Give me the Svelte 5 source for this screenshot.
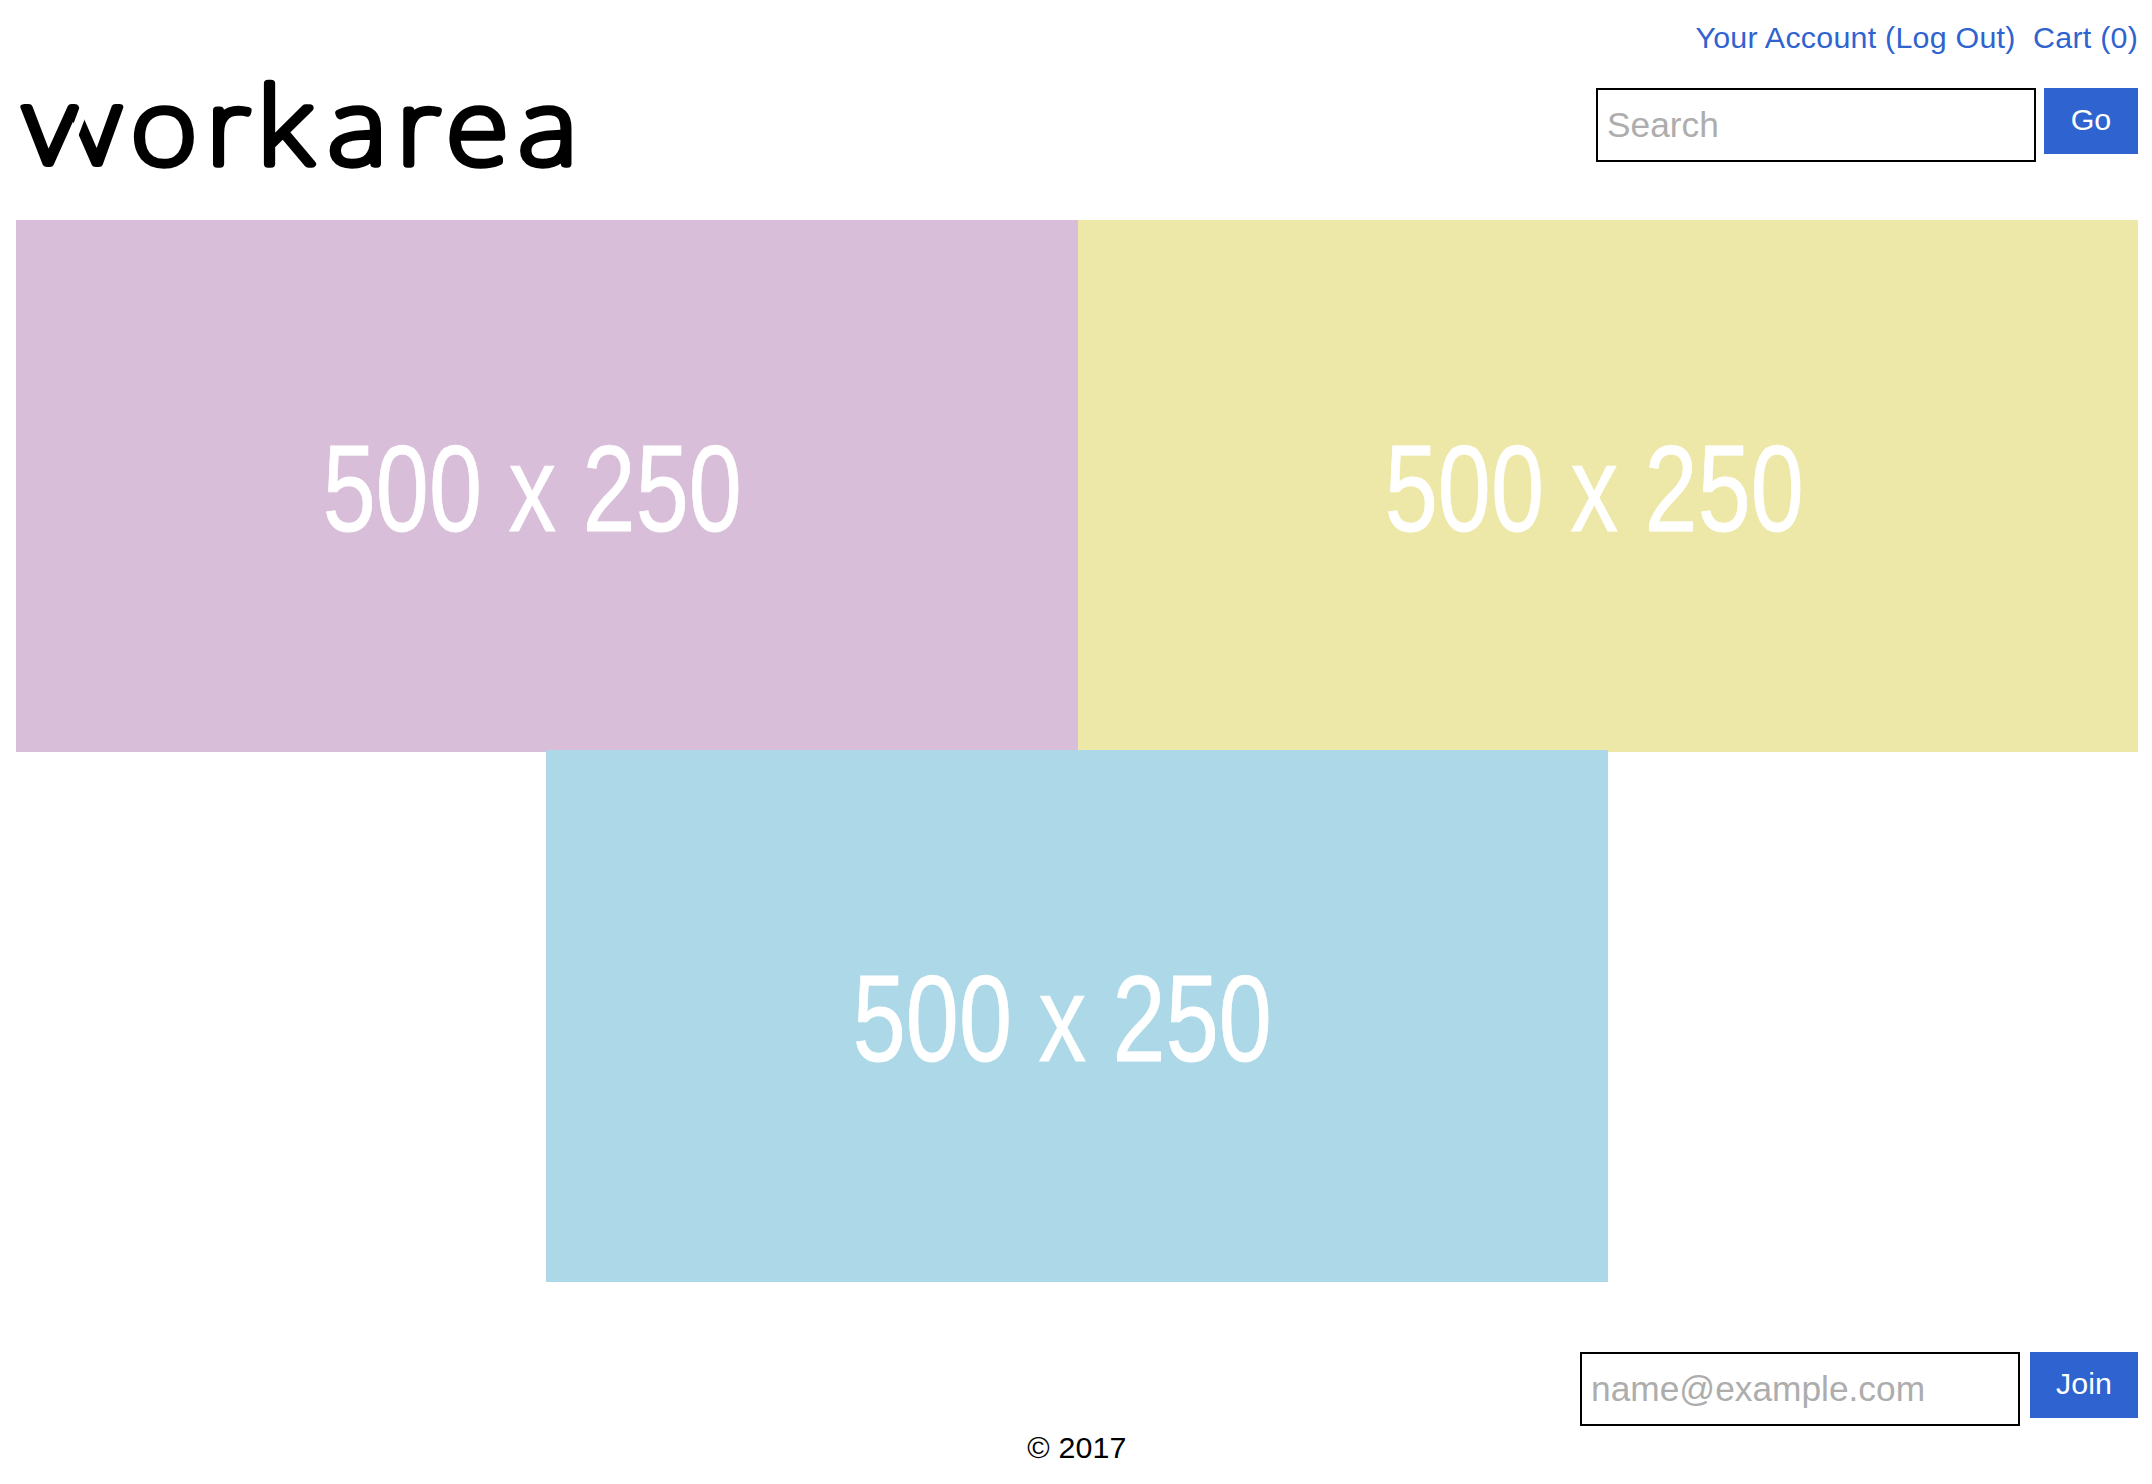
<script>
  const banners = [
    { name: 'thistle', label: '500 x 250' },
    { name: 'khaki', label: '500 x 250' },
    { name: 'sky', label: '500 x 250' }
  ];
</script>

<div class="page">
  <header>
    <a class="logo" href="#home" aria-label="workarea">
      <svg width="600" height="160" viewBox="0 40 600 160">
        <text class="mark wide" transform="translate(22 164) scale(1.36 1)">w</text>
        <!-- slit that separates the two strokes of the w -->
        <line class="slit" x1="84.5" y1="107" x2="72" y2="140" />
        <g transform="translate(0 164) scale(1.12 1)">
          <text class="mark" x="117.2 184.6 229.8 293 354.4 399 463.2" y="0">or<tspan class="tall">k</tspan>area</text>
        </g>
      </svg>
    </a>
    <div class="tools">
      <nav>
        <a href="#account">Your Account (Log Out)</a>
        <a href="#cart">Cart (0)</a>
      </nav>
      <form class="search">
        <input type="text" placeholder="Search" />
        <button type="button">Go</button>
      </form>
    </div>
  </header>

  <main>
    {#each banners as banner}
      <svg class="banner {banner.name}" viewBox="0 0 1062 532" preserveAspectRatio="xMinYMin slice">
        <text transform="translate(306.8 311) scale(0.785 1)">{banner.label}</text>
      </svg>
    {/each}
  </main>

  <footer>
    <form class="signup">
      <input type="text" placeholder="name@example.com" />
      <button type="button">Join</button>
    </form>
    <p>© 2017</p>
  </footer>
</div>

<style>
  :global(body) { background: #fff; overflow: hidden; }
  .page {
    box-sizing: border-box;
    width: 2152px;
    height: 1484px;
    padding: 0 14px 0 16px;
    font-family: "Liberation Sans", Arial, sans-serif;
    font-size: 30.4px;
    color: #000;
  }
  header { display: flex; justify-content: space-between; height: 220px; }
  .logo { margin: 40px 0 0 -16px; height: 160px; }
  .logo svg { display: block; overflow: visible; }
  .mark {
    font-family: "Noto Sans", sans-serif;
    font-weight: 100;
    font-size: 101.5px;
    fill: #000;
    stroke: #000;
    stroke-width: 7.3px;
    stroke-linejoin: round;
  }
  .wide { font-size: 107px; stroke-width: 5.9px; }
  .tall { font-size: 106.5px; }
  .slit { stroke: #fff; stroke-width: 9px; }
  .tools { display: flex; flex-direction: column; align-items: flex-end; }
  nav { display: flex; gap: 17.5px; height: 88px; line-height: 75px; letter-spacing: 0.24px; white-space: nowrap; }
  nav a { color: #2f63d0; text-decoration: none; }
  form { display: flex; align-items: flex-start; }
  .search { gap: 8px; }
  .signup { gap: 10px; justify-content: flex-end; }
  input {
    box-sizing: border-box;
    width: 440px;
    height: 74px;
    margin: 0;
    padding: 0 9px 1px;
    border: 2px solid #000;
    border-radius: 0;
    background: #fff;
    font: 35.3px "Liberation Sans", Arial, sans-serif;
  }
  input::placeholder { color: #adadad; opacity: 1; }
  button {
    height: 66px;
    padding: 0 0 4px;
    border: 0;
    background: #2f63d0;
    color: #fff;
    font: 30.4px "Liberation Sans", Arial, sans-serif;
  }
  .search button { width: 94px; }
  .signup button { width: 108px; }
  main { display: grid; grid-template-columns: 530px 532px 530px 530px; }
  .banner { display: block; width: 100%; height: 532px; }
  .banner text {
    font-family: "Liberation Sans", Arial, sans-serif;
    font-size: 121.5px;
    fill: #fff;
    stroke: #fff;
    stroke-width: 0.8px;
  }
  .thistle { grid-column: 1 / 3; background: #d8bed9; }
  .khaki { grid-column: 3 / 5; background: #eee8a8; }
  .sky { grid-column: 2 / 4; margin-top: -2px; background: #add8e7; }
  footer { padding-top: 70px; }
  p { margin: 3px 0 0; text-align: center; line-height: 36px; letter-spacing: 0.15px; }
</style>
